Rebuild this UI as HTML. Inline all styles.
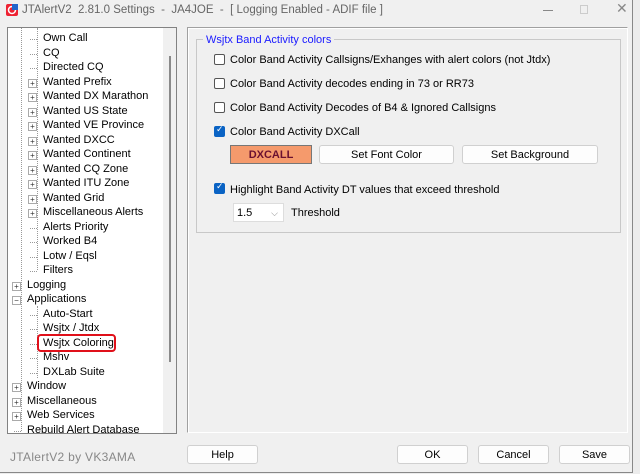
<!DOCTYPE html>
<html><head><meta charset="utf-8"><style>
*{margin:0;padding:0;box-sizing:border-box}
body{width:640px;height:474px;background:#ececec;font-family:"Liberation Sans",sans-serif;font-size:11px;color:#000;position:relative;overflow:hidden}
.win{position:absolute;left:0;top:0;width:633px;height:473px;background:#f0f0f0;border:1px solid #888;border-top:none;border-left:none}
.a{position:absolute;white-space:nowrap}
.tree{position:absolute;left:7px;top:27px;width:170px;height:407px;background:#fff;border:1px solid #828282;overflow:hidden}
.sb{position:absolute;left:155px;top:0;width:14px;height:405px;background:#f0f0f0}
.th{position:absolute;left:6px;top:28px;width:2px;height:306px;background:#8a8a8a}
.dot{position:absolute;border-left:1px dotted #999}
.hd{position:absolute;border-top:1px dotted #999;width:7px}
.ex{position:absolute;width:9px;height:9px;border:1px solid #aaa;background:#fff;font-size:8px;line-height:7px;text-align:center;color:#333}
.panel{position:absolute;left:187px;top:27px;width:441px;height:406px;border:1px solid #a0a0a0;border-right-color:#fff;border-bottom-color:#fff;box-shadow:inset 1px 1px 0 #fff}
.grp{position:absolute;left:196px;top:39px;width:425px;height:194px;border:1px solid #c8c8c8}
.cb{position:absolute;width:11px;height:11px;border:1px solid #555;border-radius:2px;background:#fff}
.cb.on{background:#0a63c4;border-color:#0a63c4}
.btn{position:absolute;height:19px;background:#fdfdfd;border:1px solid #d0d0d0;border-radius:3px;text-align:center;line-height:18px}
</style></head><body>
<div class="win">
<svg class="a" style="left:5px;top:3px" width="14" height="14"><rect x="1" y="1" width="12" height="12" rx="2" fill="#e23"/><circle cx="7" cy="7" r="3.5" fill="none" stroke="#fff" stroke-width="1.5"/><rect x="7" y="1" width="6" height="6" fill="#26c"/></svg>
<div class="a" style="left:22px;top:4px;color:#666;font-size:11.5px">JTAlertV2&nbsp; 2.81.0 Settings&nbsp; -&nbsp; JA4JOE&nbsp; -&nbsp; [ Logging Enabled - ADIF file ]</div>
<div class="a" style="left:543px;top:10px;width:10px;height:1px;background:#888"></div>
<div class="a" style="left:580px;top:5px;width:8px;height:9px;border:1px solid #ccc"></div>
<div class="a" style="left:616px;top:0px;color:#888;font-size:14px">✕</div>

<div class="tree">
<div class="sb"><div class="th"></div></div>
<div class="dot" style="left:29px;top:0;height:242px"></div>
<div class="dot" style="left:13px;top:0;height:403px"></div>
<div class="dot" style="left:29px;top:278px;height:72px"></div>
</div>
<div id="items"></div>
<div class="panel"></div>
<div class="grp"></div>
<div class="a" style="left:203px;top:34px;background:#f0f0f0;padding:0 3px;color:#1a1aff">Wsjtx Band Activity colors</div>

<div class="cb" style="left:214px;top:54px"></div><div class="a" style="left:230px;top:54px">Color Band Activity Callsigns/Exhanges with alert colors (not Jtdx)</div>
<div class="cb" style="left:214px;top:78px"></div><div class="a" style="left:230px;top:78px">Color Band Activity decodes ending in 73 or RR73</div>
<div class="cb" style="left:214px;top:102px"></div><div class="a" style="left:230px;top:102px">Color Band Activity Decodes of B4 &amp; Ignored Callsigns</div>
<div class="cb on" style="left:214px;top:126px"></div><div class="a" style="left:216px;top:124px;color:#fff;font-size:9px">✓</div><div class="a" style="left:230px;top:126px">Color Band Activity DXCall</div>
<div class="a" style="left:230px;top:145px;width:82px;height:19px;background:#f59a6c;border:1px solid #777;text-align:center;line-height:18px;font-weight:bold;color:#6a1030">DXCALL</div>
<div class="btn" style="left:319px;top:145px;width:135px">Set Font Color</div>
<div class="btn" style="left:462px;top:145px;width:136px">Set Background</div>
<div class="cb on" style="left:214px;top:183px"></div><div class="a" style="left:216px;top:181px;color:#fff;font-size:9px">✓</div><div class="a" style="left:230px;top:184px">Highlight Band Activity DT values that exceed threshold</div>
<div class="a" style="left:233px;top:203px;width:51px;height:19px;background:#fff;border:1px solid #ddd;line-height:18px;padding-left:3px">1.5<span style="position:absolute;right:5px;color:#888;font-size:9px">⌵</span></div>
<div class="a" style="left:291px;top:207px">Threshold</div>

<div class="a" style="left:10px;top:450px;color:#888;font-size:12px;letter-spacing:.3px">JTAlertV2 by VK3AMA</div>
<div class="btn" style="left:187px;top:445px;width:71px">Help</div>
<div class="btn" style="left:397px;top:445px;width:71px">OK</div>
<div class="btn" style="left:478px;top:445px;width:71px">Cancel</div>
<div class="btn" style="left:559px;top:445px;width:71px">Save</div>
</div>
<div class="a" style="left:37px;top:334px;width:79px;height:18px;border:2.5px solid #e0101a;border-radius:4px"></div>
<script>
var L=[["Own Call",2,0],["CQ",2,0],["Directed CQ",2,0],["Wanted Prefix",2,1],["Wanted DX Marathon",2,1],["Wanted US State",2,1],["Wanted VE Province",2,1],["Wanted DXCC",2,1],["Wanted Continent",2,1],["Wanted CQ Zone",2,1],["Wanted ITU Zone",2,1],["Wanted Grid",2,1],["Miscellaneous Alerts",2,1],["Alerts Priority",2,0],["Worked B4",2,0],["Lotw / Eqsl",2,0],["Filters",2,0],["Logging",1,1],["Applications",1,2],["Auto-Start",2,0],["Wsjtx / Jtdx",2,0],["Wsjtx Coloring",2,0],["Mshv",2,0],["DXLab Suite",2,0],["Window",1,1],["Miscellaneous",1,1],["Web Services",1,1],["Rebuild Alert Database",1,0]];
var h="";L.forEach(function(r,i){var y=32+i*14.5;var tx=r[1]==2?43:27;var ex=r[1]==2?33:17;
h+='<div class="hd" style="left:'+(ex-3)+'px;top:'+(y+7)+'px"></div>';
if(r[2])h+='<div class="ex" style="left:'+(ex-5)+'px;top:'+(y+3)+'px">'+(r[2]==1?'+':'−')+'</div>';
h+='<div class="a" style="left:'+tx+'px;top:'+y+'px;background:#fff">'+r[0]+'</div>';});
var d=document.getElementById("items");d.outerHTML='<div style="position:absolute;left:0;top:0;width:176px;height:433px;overflow:hidden;clip-path:inset(28px 0 0 8px)">'+h+'</div>';
</script>
</body></html>
